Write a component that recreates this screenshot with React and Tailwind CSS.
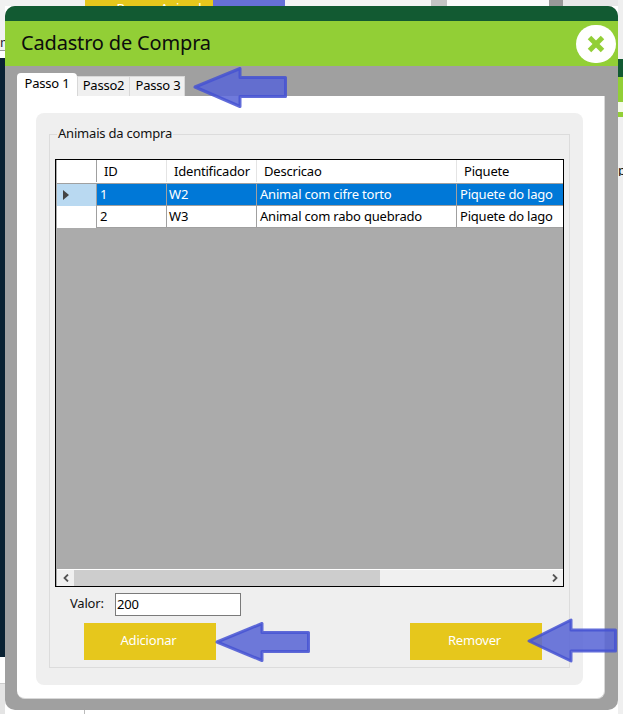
import { X } from "lucide-react";

const font = { fontFamily: '"Noto Sans", "Open Sans", sans-serif' };
const cols = "grid grid-cols-[40px_70px_90px_200px_106px]";

const rows = [
  { id: "1", code: "W2", desc: "Animal com cifre torto", place: "Piquete do lago", selected: true },
  { id: "2", code: "W3", desc: "Animal com rabo quebrado", place: "Piquete do lago" },
];

const arrows = [
  "195,87 240,68.5 240,77.5 285.5,77.5 285.5,96.5 240,96.5 240,106.5",
  "217,642 262,623.5 262,632.5 308.5,632.5 308.5,651.5 262,651.5 262,660.5",
  "529,641 571,620 571,630 615.5,630 615.5,651 571,651 571,661",
];

const Background = () => (
  <div className="flex h-full">
    <div className="flex w-[5px] flex-col">
      <div className="h-[50px] overflow-hidden bg-[#f1f1f1] pt-[36px] text-[13px] leading-none text-[#223]">m</div>
      <div className="h-[8px] border-t border-[#999] bg-white"></div>
      <div className="h-[599px] bg-[#0a2233]"></div>
      <div className="h-[26px] bg-white"></div>
      <div className="flex-1 border-t border-[#ccc] bg-[#e4e4e4]"></div>
    </div>
    <div className="flex flex-1 flex-col justify-between">
      <div className="flex h-[6px] overflow-hidden bg-[#f1f1f1]">
        <div className="w-[80px]"></div>
        <div className="w-[128px] bg-[#e6c71c] pl-[20px] text-center text-[13px] leading-[16px] tracking-[-0.2px] text-white">Buscar Animal</div>
        <div className="w-[72px] bg-[#6670d8]"></div>
        <div className="w-[146px] bg-[#f4f4f4]"></div>
        <div className="w-[16px] bg-[#c4c4c4]"></div>
        <div className="w-[102px] bg-[#fafafa]"></div>
        <div className="w-[14px] bg-[#999]"></div>
        <div className="flex-1 bg-[#e8e8e8]"></div>
      </div>
      <div className="ml-[79px] h-[4px] border-l border-[#bbb] bg-white"></div>
    </div>
    <div className="flex w-[5px] flex-col">
      <div className="h-[59px] bg-[#efefef]"></div>
      <div className="h-[18px] bg-[#125a32]"></div>
      <div className="h-[25px] bg-[#92cf36]"></div>
      <div className="h-[10px] bg-[#f4fae8]"></div>
      <div className="h-[5px] bg-[#92cf36]"></div>
      <div className="h-[47px] bg-[#f0f0f0]"></div>
      <div className="h-[12px] overflow-hidden bg-[#f0f0f0] text-[13px] leading-[12px] text-[#111]">p</div>
      <div className="flex-1 bg-[#efefef]"></div>
    </div>
  </div>
);

const Grid = () => (
  <div className="flex h-[428px] flex-col border border-black bg-[#ababab] pl-px text-[13px] leading-none tracking-[-0.2px]">
    <div className={`${cols} h-[24px] border-b border-[#a0a0a0] bg-white pb-px text-black`}>
      <div className="border-r border-[#a0a0a0]"></div>
      <div className="flex items-center border-r border-[#e4e4e4] pl-[7px]">ID</div>
      <div className="flex items-center border-r border-[#e4e4e4] pl-[7px]">Identificador</div>
      <div className="flex items-center border-r border-[#e4e4e4] pl-[7px]">Descricao</div>
      <div className="flex items-center pl-[7px]">Piquete</div>
    </div>
    {rows.map((row) => (
      <div
        key={row.id}
        className={`${cols} h-[22px] ${row.selected ? "bg-[#0078d7] text-white" : "bg-white text-black"}`}
      >
        <div className={`flex items-center border-r border-[#a0a0a0] pl-[6px] ${row.selected ? "bg-[#b9d9f1]" : "bg-white"}`}>
          {row.selected && (
            <svg width="6" height="10" viewBox="0 0 6 10">
              <path d="M0 0 L6 5 L0 10 Z" fill="#444" />
            </svg>
          )}
        </div>
        <div className="flex items-center border-b border-r border-[#a0a0a0] pl-[3px]">{row.id}</div>
        <div className="flex items-center border-b border-r border-[#a0a0a0] pl-[2px]">{row.code}</div>
        <div className="flex items-center border-b border-r border-[#a0a0a0] pl-[3px]">{row.desc}</div>
        <div className="flex items-center border-b border-[#a0a0a0] pl-[3px]">{row.place}</div>
      </div>
    ))}
    <div className="flex-1"></div>
    <div className="flex h-[17px] border-t border-white bg-[#f0f0f0]">
      <div className="flex w-[17px] items-center justify-center">
        <svg width="6" height="8" viewBox="0 0 6 8">
          <path d="M5 0.5 L1.5 4 L5 7.5" fill="none" stroke="#555" strokeWidth="1.8" />
        </svg>
      </div>
      <div className="w-[306px] bg-[#cdcdcd]"></div>
      <div className="flex-1"></div>
      <div className="flex w-[17px] items-center justify-center">
        <svg width="6" height="8" viewBox="0 0 6 8">
          <path d="M1 0.5 L4.5 4 L1 7.5" fill="none" stroke="#555" strokeWidth="1.8" />
        </svg>
      </div>
    </div>
  </div>
);

const YellowButton = ({ children }) => (
  <button className="flex h-[37px] w-[132px] items-center justify-center bg-[#e6c71c] pb-[2px] pr-[3px] text-[13px] tracking-[-0.2px] text-white">
    {children}
  </button>
);

export default function App() {
  return (
    <div className="relative h-[714px] w-[623px] overflow-hidden bg-white" style={font}>
      <Background />

      <div className="absolute left-[5px] top-[6px] flex h-[704px] w-[613px] flex-col overflow-hidden rounded-[10px] bg-[#a0a0a0]">
        <div className="h-[15px] bg-[#125a32]"></div>
        <div className="flex h-[45px] items-center justify-between bg-[#92cf36] pl-[16px] pr-[2px]">
          <h1 className="pb-[2px] text-[20px] leading-none tracking-[-0.17px] text-[#0c0c0c]">Cadastro de Compra</h1>
          <button className="flex h-[38px] w-[40px] items-center justify-center rounded-full bg-white">
            <X size={26} strokeWidth={4.5} color="#92cf36" strokeLinecap="butt" />
          </button>
        </div>

        <div className="flex flex-1 flex-col pb-[11px] pl-[12px] pr-[13px] pt-[7px]">
          <div className="flex h-[23px] items-end text-[13px] leading-none tracking-[-0.2px] text-black">
            <div className="flex h-[23px] w-[60px] items-center justify-center rounded-t-[4px] bg-white pb-[3px]">Passo 1</div>
            <div className="flex h-[20px] w-[53px] items-center justify-center border border-b-0 border-[#d8d8d8] bg-[#f0f0f0] pb-[2px]">Passo2</div>
            <div className="flex h-[20px] w-[55px] items-center justify-center border border-b-0 border-l-0 border-[#d8d8d8] bg-[#f0f0f0] pb-[2px] pl-[2px]">Passo 3</div>
          </div>

          <div className="flex-1 rounded-b-[8px] border-b border-r border-[#d8d8d8] bg-white pb-[13px] pl-[19px] pr-[21px] pt-[17px]">
            <div className="h-full rounded-[8px] bg-[#efefef] px-[13px] pb-[17px] pt-[21px]">
              <div className="relative h-full border border-[#dcdcdc] px-[5px] pt-[24px]">
                <span className="absolute left-[7px] top-[-10px] bg-[#efefef] px-px text-[13px] leading-[16px] tracking-[-0.2px] text-[#111]">
                  Animais da compra
                </span>
                <Grid />
                <div className="mt-[6px] flex h-[23px] items-center pl-[15px] text-[13px] tracking-[-0.2px]">
                  <span className="w-[45px] pb-[2px] text-[#111]">Valor:</span>
                  <input
                    readOnly
                    value="200"
                    className="h-[23px] w-[126px] border border-[#7a7a7a] bg-white px-px pb-[2px] text-[13px] text-black"
                  />
                </div>
                <div className="mt-[7px] flex justify-between pl-[29px] pr-[22px]">
                  <YellowButton>Adicionar</YellowButton>
                  <YellowButton>Remover</YellowButton>
                </div>
              </div>
            </div>
          </div>
        </div>
      </div>

      <svg className="pointer-events-none absolute inset-0" width="623" height="714">
        {arrows.map((points) => (
          <polygon
            key={points}
            points={points}
            fill="#5a66d6"
            fillOpacity="0.87"
            stroke="#4552d2"
            strokeOpacity="0.85"
            strokeWidth="3"
            strokeLinejoin="round"
          />
        ))}
      </svg>
    </div>
  );
}
